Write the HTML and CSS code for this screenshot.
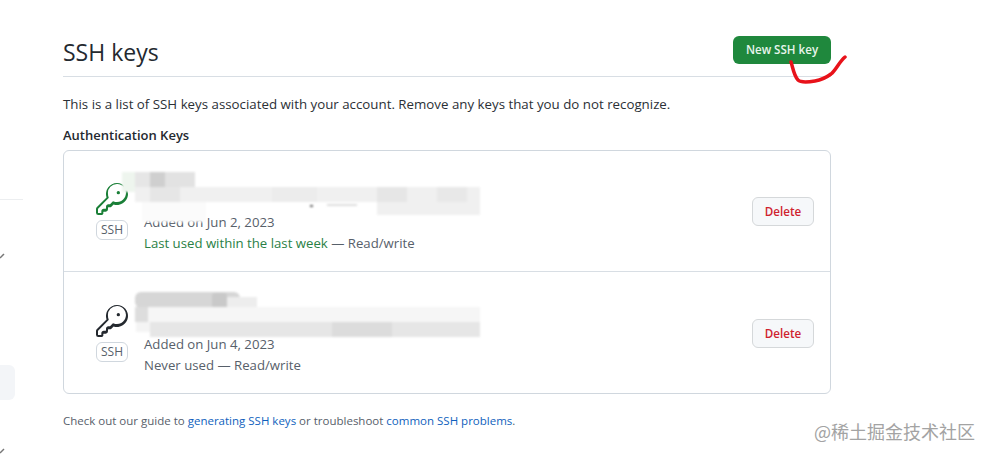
FILE: index.html
```html
<!DOCTYPE html>
<html lang="en">
<head>
    <meta charset="UTF-8">
    <title>SSH keys</title>
    <link rel="stylesheet" href="styles.css">
</head>
<body>
    <div class="page">
        <aside class="sidebar">
            <div class="side-line"></div>
            <svg class="side-tick tick-one" width="6" height="8" viewBox="0 0 6 8"><path d="M0 7L4 3" /></svg>
            <div class="side-item"></div>
            <svg class="side-tick tick-two" width="6" height="8" viewBox="0 0 6 8"><path d="M0 7L4 3" /></svg>
        </aside>
        <main class="content">
            <div class="header">
                <h2 class="title">SSH keys</h2>
                <a class="btn-new">New SSH key</a>
            </div>
            <p class="intro">This is a list of SSH keys associated with your account. Remove any keys that you do not recognize.</p>
            <h3 class="subhead">Authentication Keys</h3>
            <div class="box">
                <div class="row">
                    <div class="key-col">
                        <svg class="key key-green" width="32" height="32" viewBox="0 0 24 24"><path d="M16.75 8.5a1.25 1.25 0 1 0 0-2.5 1.25 1.25 0 0 0 0 2.5Z"/><path d="M15.75 0a8.25 8.25 0 1 1-2.541 16.101l-1.636 1.636a1.744 1.744 0 0 1-1.237.513H9.25a.25.25 0 0 0-.25.25v1.25a1.75 1.75 0 0 1-1.75 1.75h-1.5a.25.25 0 0 0-.25.25v1.25A1.75 1.75 0 0 1 3.75 24h-2A1.75 1.75 0 0 1 0 22.25v-2.836c0-.464.185-.91.513-1.237l7.386-7.388A8.25 8.25 0 0 1 15.75 0ZM9 8.25a6.733 6.733 0 0 0 .463 2.462.75.75 0 0 1-.168.804l-7.722 7.721a.25.25 0 0 0-.073.177v2.836c0 .138.112.25.25.25h2c.138 0 .25-.112.25-.25v-1.25c0-.966.784-1.75 1.75-1.75h1.5a.25.25 0 0 0 .25-.25v-1.25c0-.966.784-1.75 1.75-1.75h1.086a.25.25 0 0 0 .177-.073l1.971-1.972a.75.75 0 0 1 .804-.168A6.75 6.75 0 1 0 9 8.25Z"/></svg>
                        <span class="badge">SSH</span>
                    </div>
                    <div class="info">
                        <div class="info-name"></div>
                        <div class="info-line">Added on Jun 2, 2023</div>
                        <div class="info-line"><span class="recent">Last used within the last week</span> — Read/write</div>
                    </div>
                    <a class="btn-delete">Delete</a>
                    <svg class="smudge" width="360" height="60" viewBox="0 0 360 60">
                        <rect x="0" y="0" width="13" height="20" fill="#eef5ee"/>
                        <rect x="13" y="0" width="15" height="16" fill="#e6e6e6"/>
                        <rect x="28" y="0" width="15" height="16" fill="#cfcfcf"/>
                        <rect x="43" y="0" width="30" height="16" fill="#e2e2e2"/>
                        <rect x="13" y="15" width="345" height="15" fill="#f0f0f0"/>
                        <rect x="28" y="15" width="30" height="15" fill="#e6e6e6"/>
                        <rect x="150" y="15" width="45" height="15" fill="#ececec"/>
                        <rect x="255" y="15" width="30" height="15" fill="#e6e6e6"/>
                        <rect x="315" y="15" width="30" height="15" fill="#e8e8e8"/>
                        <rect x="20" y="30" width="64" height="20" fill="#fbfbfb"/>
                        <rect x="188" y="33" width="3" height="2" fill="#666"/>
                        <rect x="205" y="32" width="30" height="2" fill="#ddd"/>
                        <rect x="255" y="30" width="103" height="13" fill="#f0f0f0"/>
                    </svg>
                </div>
                <div class="row">
                    <div class="key-col">
                        <svg class="key" width="32" height="32" viewBox="0 0 24 24"><path d="M16.75 8.5a1.25 1.25 0 1 0 0-2.5 1.25 1.25 0 0 0 0 2.5Z"/><path d="M15.75 0a8.25 8.25 0 1 1-2.541 16.101l-1.636 1.636a1.744 1.744 0 0 1-1.237.513H9.25a.25.25 0 0 0-.25.25v1.25a1.75 1.75 0 0 1-1.75 1.75h-1.5a.25.25 0 0 0-.25.25v1.25A1.75 1.75 0 0 1 3.75 24h-2A1.75 1.75 0 0 1 0 22.25v-2.836c0-.464.185-.91.513-1.237l7.386-7.388A8.25 8.25 0 0 1 15.75 0ZM9 8.25a6.733 6.733 0 0 0 .463 2.462.75.75 0 0 1-.168.804l-7.722 7.721a.25.25 0 0 0-.073.177v2.836c0 .138.112.25.25.25h2c.138 0 .25-.112.25-.25v-1.25c0-.966.784-1.75 1.75-1.75h1.5a.25.25 0 0 0 .25-.25v-1.25c0-.966.784-1.75 1.75-1.75h1.086a.25.25 0 0 0 .177-.073l1.971-1.972a.75.75 0 0 1 .804-.168A6.75 6.75 0 1 0 9 8.25Z"/></svg>
                        <span class="badge">SSH</span>
                    </div>
                    <div class="info">
                        <div class="info-name"></div>
                        <div class="info-line">Added on Jun 4, 2023</div>
                        <div class="info-line">Never used — Read/write</div>
                    </div>
                    <a class="btn-delete">Delete</a>
                    <svg class="smudge smudge-two" width="360" height="50" viewBox="0 0 360 50">
                        <rect x="13" y="0" width="105" height="16" rx="6" fill="#d6d6d6"/>
                        <rect x="90" y="1" width="15" height="15" rx="3" fill="#c9c9c9"/>
                        <rect x="105" y="5" width="30" height="11" fill="#ededed"/>
                        <rect x="13" y="15" width="345" height="15" fill="#f6f6f6"/>
                        <rect x="13" y="15" width="13" height="15" fill="#dddddd"/>
                        <rect x="28" y="30" width="330" height="15" fill="#e6e6e6"/>
                        <rect x="210" y="30" width="60" height="15" fill="#dcdcdc"/>
                        <rect x="14" y="30" width="14" height="10" fill="#f4f4f4"/>
                    </svg>
                </div>
            </div>
            <p class="guide">Check out our guide to <a>generating SSH keys</a> or troubleshoot <a>common SSH problems</a>.</p>
        </main>
        <svg class="scribble" width="60" height="32" viewBox="0 0 60 32"><path d="M2 8C4 14 5 22 9 26C12 29 20 28 26 27C32 26 38 23 42 20C47 16 50 8 56 3"/></svg>
        <div class="watermark">@稀土掘金技术社区</div>
    </div>
</body>
</html>
```
FILE: styles.css
```css
*{
    box-sizing: border-box;
    font-family: "Open Sans", "Noto Sans", Arial, sans-serif;
}
body{
    margin: 0;
    background: #fff;
    color: #2d333a;
}
.page{
    position: relative;
    display: flex;
    width: 990px;
    height: 457px;
    overflow: hidden;
}
.sidebar{
    width: 63px;
    flex-shrink: 0;
    padding-top: 199px;
}
.side-line{
    width: 23px;
    height: 1px;
    background: #eceef0;
}
.side-tick{
    display: block;
}
.side-tick path{
    stroke: #777;
    stroke-width: 1.5;
    fill: none;
}
.tick-one{
    margin-top: 51px;
}
.side-item{
    width: 15px;
    height: 35px;
    margin-top: 106px;
    background: #f3f5f8;
    border-radius: 0 6px 6px 0;
}
.tick-two{
    margin-top: 46px;
}
.content{
    width: 768px;
    padding-top: 36px;
}
.header{
    display: flex;
    justify-content: space-between;
    height: 41px;
    border-bottom: 1px solid #d8dee4;
}
.title{
    margin: 0;
    font-size: 23px;
    line-height: 32px;
    font-weight: 400;
    color: #24292f;
}
.btn-new{
    width: 98px;
    height: 28px;
    background: #1f883d;
    border-radius: 6px;
    color: #e8f5ec;
    font-size: 11.6px;
    font-weight: 600;
    line-height: 28px;
    text-align: center;
}
.intro{
    margin: 17px 0 0;
    font-size: 13.3px;
    line-height: 20px;
    color: #2b3036;
}
.subhead{
    margin: 11px 0 0;
    font-size: 13px;
    line-height: 20px;
    font-weight: 600;
    color: #24292f;
}
.box{
    margin-top: 5px;
    height: 244px;
    border: 1px solid #d0d7de;
    border-radius: 6px;
}
.row{
    position: relative;
    display: flex;
    align-items: center;
    height: 120px;
    padding: 0 16px 0 32px;
}
.row + .row{
    border-top: 1px solid #d8dee4;
    height: 122px;
}
.row + .row .btn-delete,
.row + .row .key-col{
    margin-top: 2px;
}
.key-col{
    display: flex;
    flex-direction: column;
    align-items: center;
    width: 32px;
    gap: 5px;
}
.key{
    fill: #24292f;
}
.key-green{
    fill: #1a7f37;
}
.badge{
    width: 32px;
    height: 20px;
    border: 1px solid #d0d7de;
    border-radius: 6px;
    font-size: 12px;
    line-height: 18px;
    text-align: center;
    color: #57606a;
}
.info{
    flex: 1;
    margin-left: 16px;
    padding-top: 20px;
}
.info-name{
    height: 24px;
}
.info-line{
    font-size: 13.2px;
    line-height: 21px;
    color: #57606a;
}
.recent{
    color: #2a7f45;
}
.btn-delete{
    width: 62px;
    height: 29px;
    background: #f6f8fa;
    border: 1px solid #d5d8da;
    border-radius: 6px;
    color: #cf222e;
    font-size: 11.6px;
    font-weight: 600;
    line-height: 27px;
    text-align: center;
}
/* blurred out key names, these sit on top of the row */
.smudge{
    position: absolute;
    left: 58px;
    top: 21px;
    filter: blur(1px);
}
.smudge-two{
    top: 20px;
}
.guide{
    margin: 18px 0 0;
    font-size: 11.5px;
    line-height: 18px;
    color: #57606a;
}
.guide a{
    color: #0f5fbd;
}
.scribble{
    position: absolute;
    left: 789px;
    top: 54px;
}
.scribble path{
    fill: none;
    stroke: #e8121a;
    stroke-width: 3.5;
    stroke-linecap: round;
}
.watermark{
    position: absolute;
    left: 814px;
    top: 418px;
    font-family: "Noto Sans CJK SC", sans-serif;
    font-size: 18px;
    line-height: 26px;
    color: #a3a3a3;
}
```
